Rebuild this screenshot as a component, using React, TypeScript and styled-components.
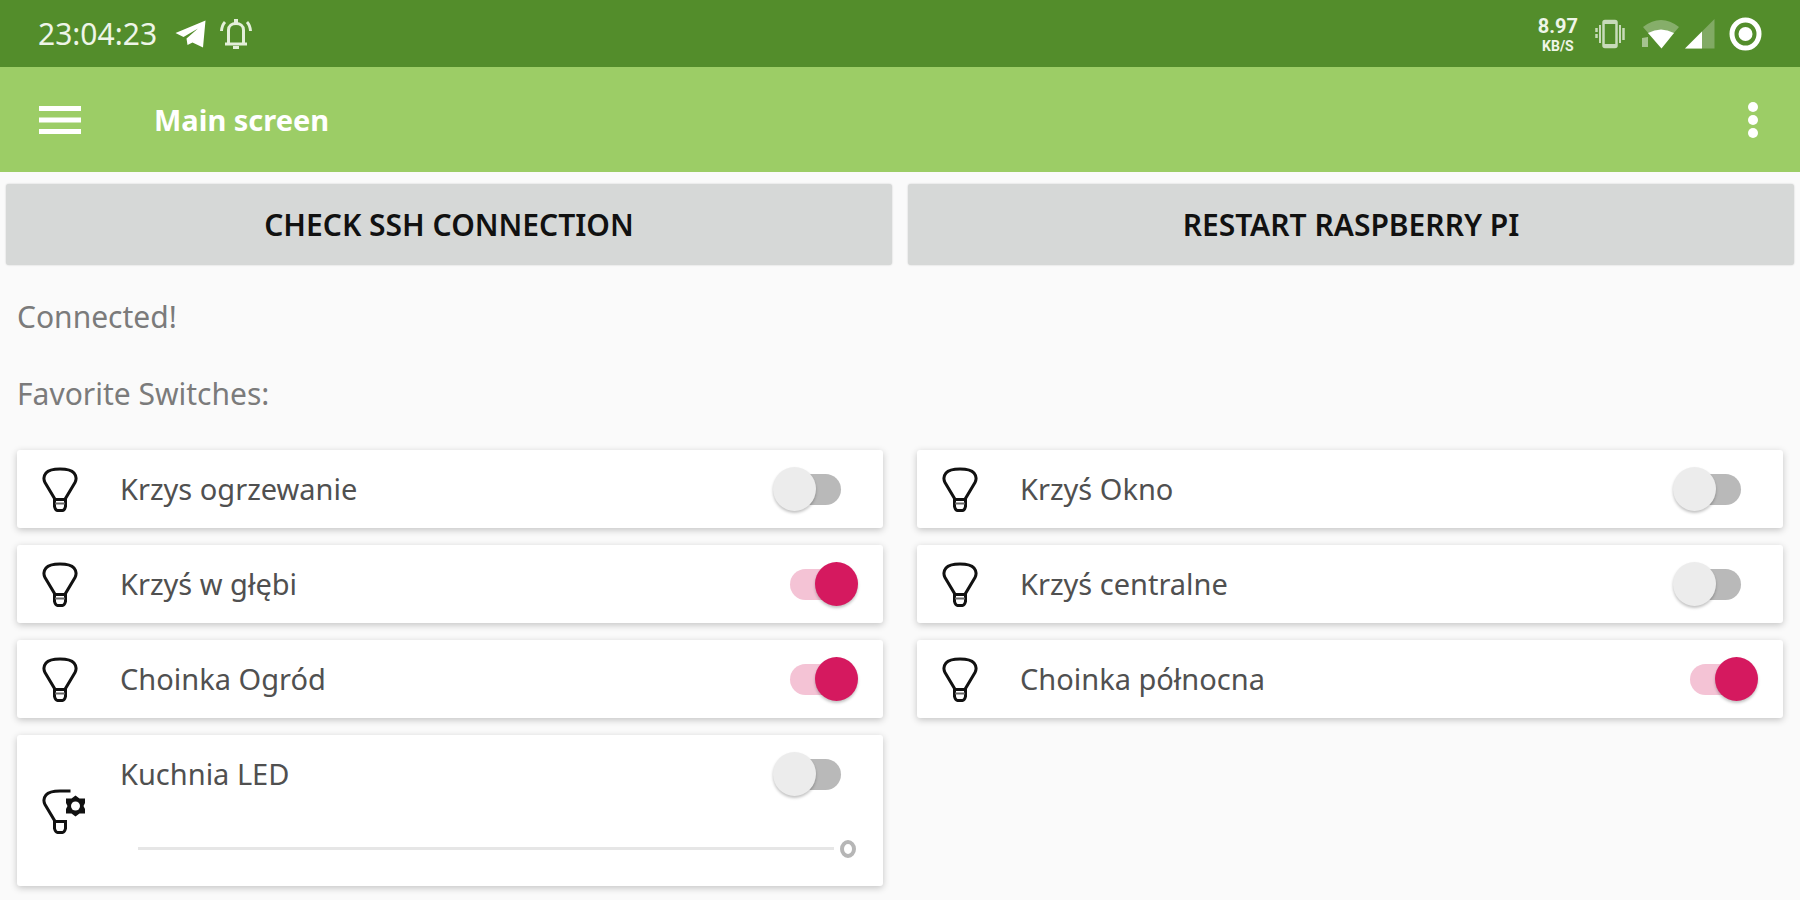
import React, { useState } from "react";
import styled, { createGlobalStyle, css } from "styled-components";

const GlobalStyle = createGlobalStyle`
  * { box-sizing: border-box; }
  body {
    margin: 0;
    background: #fafafa;
    font-family: "Noto Sans", "Open Sans", sans-serif;
    font-size: 30px;
    line-height: 40px;
  }
`;

const Page = styled.div`
  min-height: 100vh;
  padding-bottom: 12px;
`;

const StatusBar = styled.div`
  display: flex;
  align-items: center;
  justify-content: space-between;
  height: 67px;
  padding: 0 38px;
  background: #538d2b;
  color: #eef5e8;
`;

const StatusGroup = styled.div<{ $gap: number }>`
  display: flex;
  align-items: center;
  gap: ${(p) => p.$gap}px;
`;

const NetworkSpeed = styled.div`
  display: flex;
  flex-direction: column;
  align-items: center;
  font-family: Roboto, "Liberation Sans", sans-serif;
  font-weight: 700;
`;

const SpeedValue = styled.span`
  font-size: 20px;
  line-height: 24px;
`;

const SpeedUnit = styled.span`
  font-size: 14px;
  line-height: 16px;
`;

const Toolbar = styled.header`
  display: flex;
  align-items: center;
  height: 105px;
  padding: 0 38px;
  background: #9ccd66;
  color: #fff;
`;

const IconButton = styled.button`
  display: flex;
  padding: 0;
  border: 0;
  background: none;
  color: inherit;
  cursor: pointer;
`;

const Title = styled.h1`
  flex: 1;
  margin: 0 0 0 72px;
  font-size: 29px;
  font-weight: 700;
  line-height: 40px;
`;

const ActionRow = styled.div`
  display: grid;
  grid-template-columns: 1fr 1fr;
  gap: 16px;
  padding: 12px 6px 0;
`;

const ActionButton = styled.button`
  height: 81px;
  border: 0;
  border-radius: 3px;
  background: #d6d8d7;
  box-shadow: 0 0 2px rgba(0, 0, 0, 0.2);
  color: #111;
  font: inherit;
  font-weight: 600;
  text-transform: uppercase;
  cursor: pointer;
`;

const Message = styled.p`
  margin: 32px 17px 0;
  color: #7b7b7b;
`;

const SectionTitle = styled.h2`
  margin: 37px 17px 36px;
  color: #7b7b7b;
  font-size: 30px;
  font-weight: 400;
  line-height: 40px;
`;

const CardGrid = styled.div`
  display: grid;
  grid-template-columns: 1fr 1fr;
  align-items: start;
  gap: 17px 34px;
  padding: 0 17px;
`;

const Card = styled.div`
  display: grid;
  grid-template-columns: 45px 1fr;
  column-gap: 33px;
  align-items: center;
  padding: 0 25px;
  border-radius: 3px;
  background: #fff;
  box-shadow: 0 2px 7px rgba(0, 0, 0, 0.22);
`;

const CardBody = styled.div`
  min-width: 0;
`;

const SwitchRow = styled.label`
  display: flex;
  align-items: center;
  justify-content: space-between;
  height: 78px;
  color: #505050;
  font-size: 29px;
  cursor: pointer;
`;

const thumbOn = css`
  justify-self: end;
  background: #d5195f;
`;

const Toggle = styled.input`
  appearance: none;
  display: grid;
  align-items: center;
  width: 85px;
  height: 44px;
  margin: 0;
  cursor: pointer;

  &::before,
  &::after {
    content: "";
    grid-area: 1 / 1;
  }

  &::before {
    justify-self: center;
    width: 51px;
    height: 31px;
    border-radius: 16px;
    background: #b9b9b9;
  }

  &::after {
    justify-self: start;
    width: 43px;
    height: 44px;
    border-radius: 50%;
    background: #ececec;
    box-shadow: 0 2px 3px rgba(0, 0, 0, 0.24);
  }

  &:checked::before {
    background: #f4c3d5;
  }

  &:checked::after {
    ${thumbOn}
  }
`;

const SliderRow = styled.div`
  display: flex;
  height: 73px;
  padding: 0 2px 0 18px;
`;

const thumbRing = css`
  appearance: none;
  width: 16px;
  height: 18px;
  border: 4px solid #b6b6b6;
  border-radius: 50%;
  background: #fff;
`;

const Slider = styled.input`
  appearance: none;
  width: 100%;
  height: 71px;
  margin: 0;
  background: linear-gradient(#e6e6e6, #e6e6e6) no-repeat left center / calc(100% - 22px) 3px;

  &::-webkit-slider-thumb {
    ${thumbRing}
  }
  &::-moz-range-thumb {
    ${thumbRing}
  }
`;

function BulbIcon() {
  return (
    <svg width="36" height="46" viewBox="0 0 36 46" fill="none" stroke="#111" strokeWidth="3" aria-hidden="true">
      <path d="M12.5 34V32.500L3 16.500C1.500 13.500 1.500 10 4 7C6.500 4 11 3 18 3S29.500 4 32 7C34.500 10 34.500 13.500 33 16.500L23.500 32.500V34" />
      <path d="M12.500 33.500H23.500V40.500Q22.500 44.500 20.500 44.500H15.500Q13.500 44.500 12.500 40.500Z" />
      <path d="M13 37.500H23" strokeWidth="2" stroke="#666" />
    </svg>
  );
}

function BulbSettingsIcon() {
  return (
    <svg width="45" height="46" viewBox="0 0 45 46" fill="none" stroke="#111" strokeWidth="3" aria-hidden="true">
      <path d="M28.500 3H18C11 3 6.500 4 4 7C1.500 10 1.500 13.500 3 16.500L12.500 32.500V34" />
      <path d="M12.500 33.500H23.500V40.500Q22.500 44.500 20.500 44.500H15.500Q13.500 44.500 12.500 40.500Z" />
      <path
        d="M33.500 7.500 37.500 10.500H43V15L41.500 18 43 21V25.500H37.500L33.500 28.500 29.500 25.500H24V21L25.500 18 24 15V10.500H29.500Z"
        fill="#111"
        stroke="none"
      />
      <circle cx="33.500" cy="18" r="4.500" fill="#fff" stroke="none" />
    </svg>
  );
}

function TelegramIcon() {
  return (
    <svg width="31" height="28" viewBox="0 0 31 28" fill="#fff" aria-hidden="true">
      <path d="M30.500 0.500 28 27.500 17.500 22.500 12.500 25 11.500 18.500 23 8.500 8.500 17 0.500 13Z" />
    </svg>
  );
}

function AlarmBellIcon() {
  return (
    <svg width="32" height="32" viewBox="0 0 32 32" fill="none" stroke="#e4efda" strokeWidth="3" aria-hidden="true">
      <path d="M5 26H27M8.500 26V12C8.500 7.500 12 5.500 16 5.500S23.500 7.500 23.500 12V26" />
      <path d="M16 1V5" strokeWidth="4" />
      <path d="M13 29.500H19" strokeWidth="3" />
      <path d="M5 4Q2 7 1.500 13M27 4Q30 7 30.500 13" />
    </svg>
  );
}

function VibrateIcon() {
  return (
    <svg width="30" height="30" viewBox="0 0 30 30" fill="none" stroke="#c8dbb9" strokeWidth="2.500" aria-hidden="true">
      <rect x="8.500" y="2" width="13" height="26" rx="1.500" />
      <path d="M9 3.500H21M9 26.500H21" strokeWidth="3" />
      <path d="M5 6V24M25 6V24" strokeWidth="2" />
      <path d="M1.500 9V21" strokeDasharray="4 2" />
      <path d="M28.500 9V21" />
    </svg>
  );
}

function WifiIcon() {
  return (
    <svg width="38" height="30" viewBox="0 0 38 30" aria-hidden="true">
      <path d="M1 8Q19-6 37 8L31 15Q20 7 7 15Z" fill="#86ae6a" />
      <path d="M6 14Q19 7 32 14L19.500 29.500Z" fill="#fff" />
      <path d="M0 19 6 18V28H0Z" fill="#a5c38f" />
    </svg>
  );
}

function SignalIcon() {
  return (
    <svg width="30" height="30" viewBox="0 0 30 30" aria-hidden="true">
      <path d="M29.500 0V29.500H0Z" fill="#81aa64" />
      <path d="M17 12.500V29.500H0Z" fill="#fff" />
    </svg>
  );
}

function BatteryIcon() {
  return (
    <svg width="33" height="34" viewBox="0 0 33 34" aria-hidden="true">
      <ellipse cx="16.500" cy="17" rx="13.500" ry="14" fill="none" stroke="#fff" strokeWidth="5" />
      <circle cx="16.500" cy="17" r="7" fill="#fff" />
    </svg>
  );
}

type SwitchItem = { id: string; name: string; on: boolean; level?: number };

const initialSwitches: SwitchItem[] = [
  { id: "ogrzewanie", name: "Krzys ogrzewanie", on: false },
  { id: "okno", name: "Krzyś Okno", on: false },
  { id: "w-glebi", name: "Krzyś w głębi", on: true },
  { id: "centralne", name: "Krzyś centralne", on: false },
  { id: "ogrod", name: "Choinka Ogród", on: true },
  { id: "polnocna", name: "Choinka północna", on: true },
  { id: "kuchnia", name: "Kuchnia LED", on: false, level: 100 },
];

export default function App() {
  const [switches, setSwitches] = useState(initialSwitches);

  const update = (id: string, change: Partial<SwitchItem>) =>
    setSwitches((list) => list.map((s) => (s.id === id ? { ...s, ...change } : s)));

  return (
    <Page>
      <GlobalStyle />
      <StatusBar>
        <StatusGroup $gap={18}>
          <span>23:04:23</span>
          <StatusGroup $gap={14}>
            <TelegramIcon />
            <AlarmBellIcon />
          </StatusGroup>
        </StatusGroup>
        <StatusGroup $gap={14}>
          <StatusGroup $gap={17}>
            <NetworkSpeed>
              <SpeedValue>8.97</SpeedValue>
              <SpeedUnit>KB/S</SpeedUnit>
            </NetworkSpeed>
            <VibrateIcon />
            <StatusGroup $gap={5}>
              <WifiIcon />
              <SignalIcon />
            </StatusGroup>
          </StatusGroup>
          <BatteryIcon />
        </StatusGroup>
      </StatusBar>

      <Toolbar>
        <IconButton type="button" aria-label="Open menu">
          <svg width="44" height="30" viewBox="0 0 44 30" fill="none" stroke="#fff" strokeWidth="5">
            <path d="M1 3.500H43M1 15H43M1 26.500H43" />
          </svg>
        </IconButton>
        <Title>Main screen</Title>
        <IconButton type="button" aria-label="More options">
          <svg width="18" height="38" viewBox="0 0 18 38" fill="#fff">
            <circle cx="9" cy="6" r="5" />
            <circle cx="9" cy="19" r="5" />
            <circle cx="9" cy="32" r="5" />
          </svg>
        </IconButton>
      </Toolbar>

      <main>
        <ActionRow>
          <ActionButton type="button">Check SSH connection</ActionButton>
          <ActionButton type="button">Restart Raspberry Pi</ActionButton>
        </ActionRow>
        <Message>Connected!</Message>
        <SectionTitle>Favorite Switches:</SectionTitle>
        <CardGrid>
          {switches.map((s) => (
            <Card key={s.id}>
              {s.level === undefined ? <BulbIcon /> : <BulbSettingsIcon />}
              <CardBody>
                <SwitchRow>
                  {s.name}
                  <Toggle
                    type="checkbox"
                    role="switch"
                    checked={s.on}
                    onChange={(e) => update(s.id, { on: e.target.checked })}
                  />
                </SwitchRow>
                {s.level !== undefined && (
                  <SliderRow>
                    <Slider
                      type="range"
                      aria-label={`${s.name} brightness`}
                      min={0}
                      max={100}
                      value={s.level}
                      disabled={!s.on}
                      onChange={(e) => update(s.id, { level: Number(e.target.value) })}
                    />
                  </SliderRow>
                )}
              </CardBody>
            </Card>
          ))}
        </CardGrid>
      </main>
    </Page>
  );
}
